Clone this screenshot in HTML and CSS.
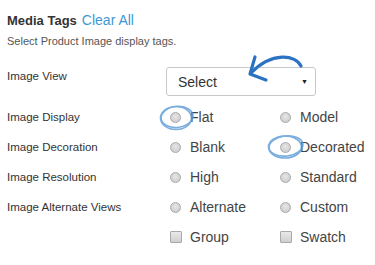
FILE: index.html
```html
<!DOCTYPE html>
<html lang="en">
<head>
  <meta charset="UTF-8" />
  <title>Media Tags</title>
  <link rel="stylesheet" href="styles.css">
</head>
<body>
  <div class="panel">
    <div class="head">
      <h3>Media Tags</h3>
      <a href="#">Clear All</a>
    </div>
    <p class="hint">Select Product Image display tags.</p>
    <div class="form">
      <span class="label top">Image View</span>
      <div class="select-cell">
        <div class="select">Select<span class="caret">&#9660;</span></div>
      </div>

      <span class="label">Image Display</span>
      <label class="opt"><input type="radio" name="display">Flat</label>
      <label class="opt"><input type="radio" name="display">Model</label>

      <span class="label">Image Decoration</span>
      <label class="opt"><input type="radio" name="decoration">Blank</label>
      <label class="opt"><input type="radio" name="decoration">Decorated</label>

      <span class="label">Image Resolution</span>
      <label class="opt"><input type="radio" name="resolution">High</label>
      <label class="opt"><input type="radio" name="resolution">Standard</label>

      <span class="label">Image Alternate Views</span>
      <label class="opt"><input type="radio" name="alt">Alternate</label>
      <label class="opt"><input type="radio" name="alt">Custom</label>

      <span class="label"></span>
      <label class="opt"><input type="checkbox">Group</label>
      <label class="opt"><input type="checkbox">Swatch</label>
    </div>
  </div>

  <!-- hand drawn annotations -->
  <svg class="marks" width="375" height="265" viewBox="0 0 375 265">
    <g fill="none" stroke="#2b73c2" stroke-width="3.2" stroke-linecap="round" stroke-linejoin="round">
      <path d="M301 66 C296 55 272 51 251 73" />
      <path d="M255 57 L250 74 L266 80" />
    </g>
    <g fill="none" stroke="#5a9ad6" stroke-width="1.6" opacity="0.8">
      <ellipse cx="176" cy="118" rx="15.5" ry="11.5" />
      <ellipse cx="177" cy="117" rx="16" ry="10.5" transform="rotate(-6 177 117)" />
      <ellipse cx="285" cy="147" rx="16.5" ry="11" />
      <ellipse cx="286" cy="146" rx="17" ry="10" transform="rotate(-7 286 146)" />
    </g>
  </svg>
</body>
</html>
```

FILE: styles.css
```css
* {
  box-sizing: border-box;
}
body {
  margin: 0;
  font-family: "Liberation Sans", Arial, sans-serif;
  background: #fff;
  color: #333;
}
.panel {
  padding: 12px 7px 0 7px;
}
.head {
  display: flex;
  align-items: baseline;
  gap: 5px;
  height: 22px;
}
.head h3 {
  margin: 0;
  font-size: 13px;
  font-weight: bold;
  color: #333;
}
.head a {
  font-size: 14px;
  color: #3d98d3;
  text-decoration: none;
}
.hint {
  margin: 0;
  font-size: 11px;
  color: #555;
  height: 33px;
  line-height: 15px;
}
.form {
  display: grid;
  grid-template-columns: 159px 110px 1fr;
  grid-template-rows: 35px repeat(5, 30px);
  align-items: center;
}
.label {
  font-size: 11.5px;
  color: #333;
}
.label.top {
  align-self: start;
  padding-top: 3px;
}
.select-cell {
  grid-column: 2 / 4;
  align-self: start;
}
.select {
  width: 150px;
  height: 29px;
  border: 1px solid #c8c8c8;
  border-radius: 3px;
  padding: 0 7px 0 11px;
  display: flex;
  align-items: center;
  justify-content: space-between;
  font-size: 14px;
  color: #333;
}
.caret {
  font-size: 7px;
  color: #222;
}
.opt {
  display: flex;
  align-items: center;
  font-size: 14px;
  color: #444;
}
.opt input {
  appearance: none;
  -webkit-appearance: none;
  margin: 0 9px 0 4px;
  width: 11px;
  height: 11px;
  border: 1px solid #a9a9a9;
  background: radial-gradient(circle at 50% 40%, #e6e6e6, #c7c7c7);
}
.opt input[type="radio"] {
  border-radius: 50%;
}
.opt input[type="checkbox"] {
  border-radius: 1px;
  width: 12px;
  height: 12px;
  margin-right: 8px;
  background: linear-gradient(#e9e9e9, #cfcfcf);
}
.marks {
  position: absolute;
  left: 0;
  top: 0;
  pointer-events: none;
}
```
